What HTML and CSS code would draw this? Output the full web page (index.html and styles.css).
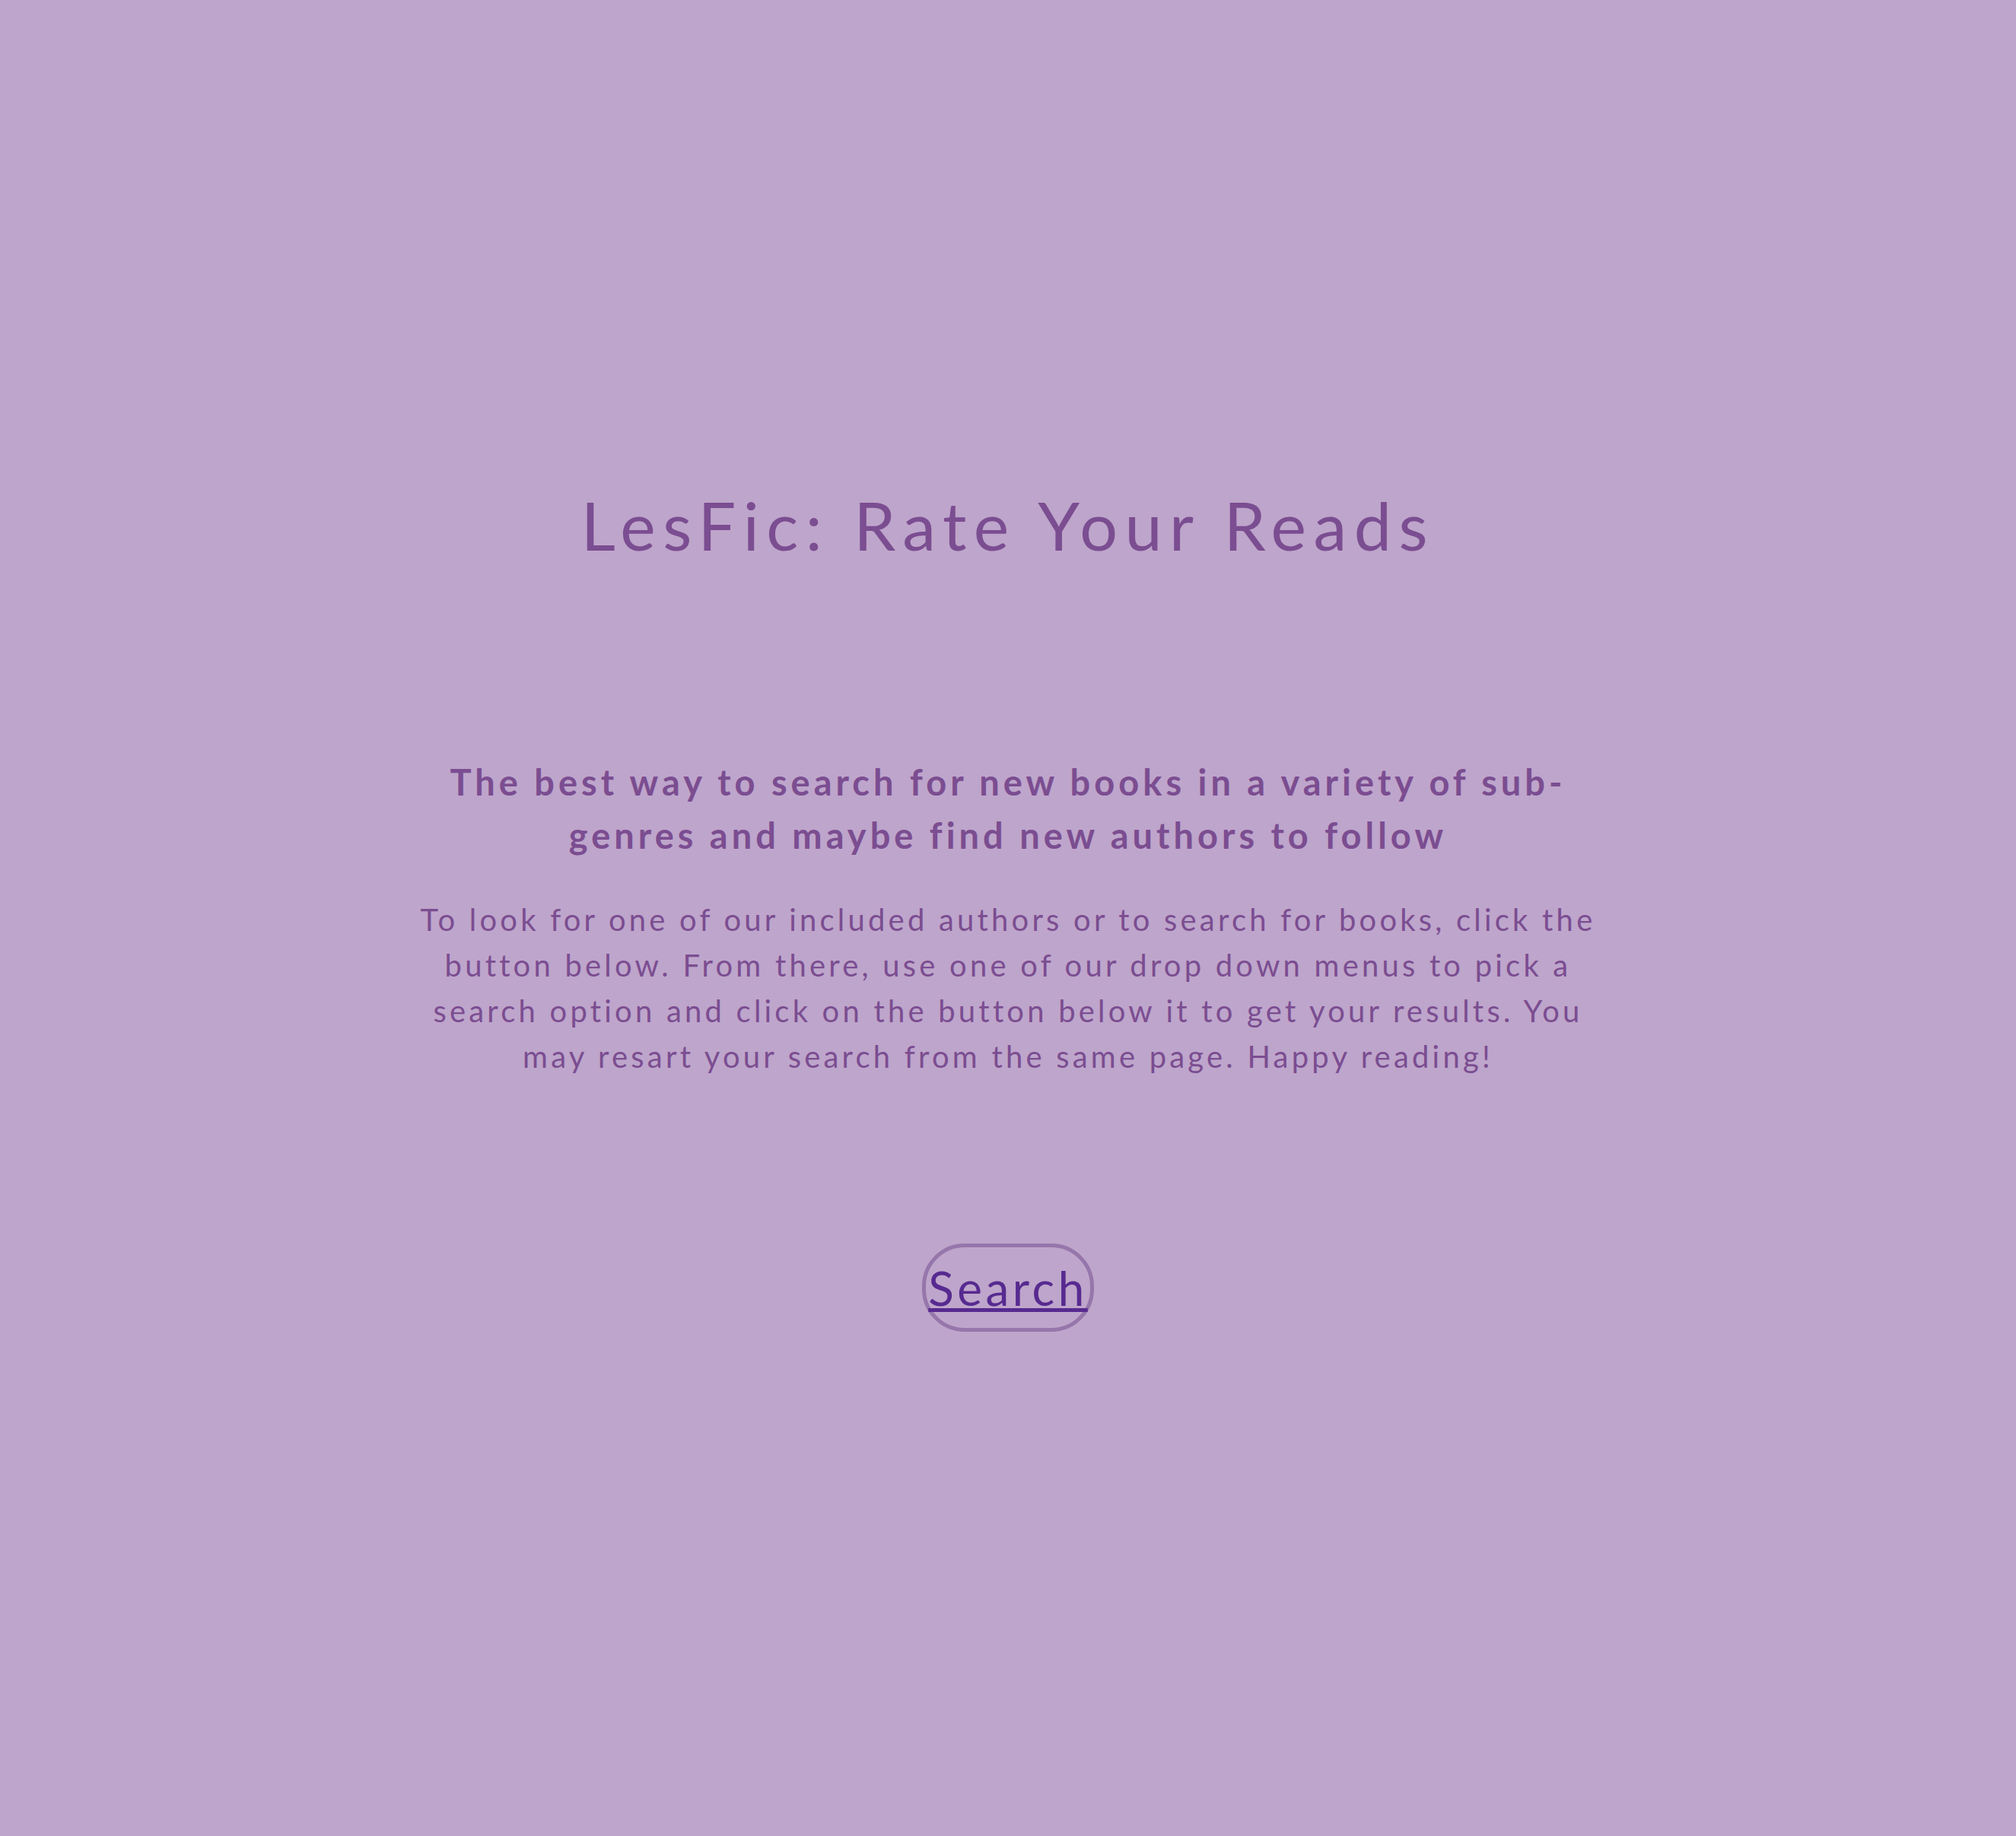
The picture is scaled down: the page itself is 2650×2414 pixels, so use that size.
FILE: index.html
```html
<!DOCTYPE html>
<html lang="en">
<head>
<meta charset="utf-8">
<title>LesFic: Rate Your Reads</title>
<link rel="stylesheet" href="styles.css">
</head>
<body>
<main class="page">
  <h1 class="title">LesFic: Rate Your Reads</h1>
  <section class="intro">
    <h2 class="tagline">The best way to search for new books in a variety of sub-genres and maybe find new authors to follow</h2>
    <p class="info">To look for one of our included authors or to search for books, click the button below. From there, use one of our drop down menus to pick a search option and click on the button below it to get your results. You may resart your search from the same page. Happy reading!</p>
  </section>
  <div class="actions">
    <a class="search-btn" href="#">Search</a>
  </div>
</main>
</body>
</html>
```

FILE: styles.css
```css
html, body {
  margin: 0;
  padding: 0;
  background: #bea5cb;
}
body {
  font-family: Lato, "Open Sans", sans-serif;
  color: #7b4d91;
}
.page {
  display: flex;
  flex-direction: column;
  align-items: center;
  padding-top: 630px;
  padding-bottom: 500px;
}
.title {
  margin: 0;
  font-size: 88px;
  font-weight: 400;
  letter-spacing: 9.5px;
  line-height: 120px;
}
.intro {
  width: 1580px;
  margin-top: 243px;
  text-align: center;
}
.tagline {
  margin: 0 auto;
  width: 1540px;
  font-size: 47px;
  font-weight: 700;
  letter-spacing: 5px;
  line-height: 70px;
}
.info {
  margin: 46px 0 0;
  font-size: 40px;
  letter-spacing: 4.2px;
  line-height: 60px;
}
.actions {
  margin-top: 216px;
}
.search-btn {
  display: inline-block;
  border: 5px solid #9676ab;
  border-radius: 56px;
  padding: 17px 3px;
  font-size: 62px;
  letter-spacing: 4.5px;
  line-height: 72px;
  color: #572a90;
  text-decoration: underline;
  text-decoration-thickness: 5px;
}
```
